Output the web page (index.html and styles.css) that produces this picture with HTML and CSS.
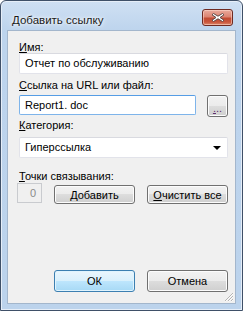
FILE: index.html
```html
<!DOCTYPE html>
<html lang="ru">
<head>
<meta charset="utf-8">
<title>Добавить ссылку</title>
<link rel="stylesheet" href="styles.css">
</head>
<body>
<div class="window">
  <div class="titlebar">
    <span class="title">Добавить ссылку</span>
    <div class="close">
      <svg width="16" height="11" viewBox="0 0 16 11">
        <path d="M3.5 1.5 L8 4.2 L12.5 1.5 L14 2.8 L10 5.5 L14 8.2 L12.5 9.5 L8 6.8 L3.5 9.5 L2 8.2 L6 5.5 L2 2.8 Z" fill="#fff" stroke="#5d4a48" stroke-width="1" stroke-linejoin="round"/>
      </svg>
    </div>
  </div>
  <div class="client">
    <div class="label"><u>И</u>мя:</div>
    <div class="input name">Отчет по обслуживанию</div>

    <div class="label l2"><u>С</u>сылка на URL или файл:</div>
    <div class="row url">
      <div class="input focus grow">Report1. doc</div>
      <div class="btn browse"><span class="dots"><u>.</u>..</span></div>
    </div>

    <div class="label l3"><u>К</u>атегория:</div>
    <div class="input combo">Гиперссылка<span class="arrow"></span></div>

    <div class="label l4"><u>Т</u>очки связывания:</div>
    <div class="row pts">
      <div class="count">0</div>
      <div class="btn wide"><u>Д</u>обавить</div>
      <div class="btn wide"><u>О</u>чистить все</div>
    </div>

    <div class="spacer"></div>
    <div class="footer">
      <div class="btn wide default">ОК</div>
      <div class="btn wide">Отмена</div>
    </div>
    <svg class="grip" width="11" height="11" viewBox="0 0 11 11">
      <path d="M10 2 L2 10 M10 5 L5 10 M10 8 L8 10" stroke="#b4b4b4" stroke-width="1"/>
      <path d="M10.5 2.5 L2.5 10.5 M10.5 5.5 L5.5 10.5 M10.5 8.5 L8.5 10.5" stroke="#fff" stroke-width="0.8"/>
    </svg>
  </div>
</div>
</body>
</html>
```
FILE: styles.css
```css
* { box-sizing: border-box; }
html, body { margin: 0; padding: 0; }
body {
  width: 243px;
  height: 311px;
  font-family: "Liberation Sans", Arial, sans-serif;
  font-size: 11px;
  color: #000;
  background: #fff;
}
.window {
  width: 243px;
  height: 311px;
  border: 1px solid #3f5068;
  border-radius: 6px 6px 0 0;
  box-shadow: inset 0 0 0 1px #e6eef8;
  background: linear-gradient(#cfe0f3 0, #bdd4ed 30px, #bcd3ec 100%);
  padding: 0 6px 6px 6px;
  display: flex;
  flex-direction: column;
}
.titlebar {
  height: 29px;
  flex: none;
  display: flex;
  align-items: flex-start;
  justify-content: space-between;
  padding: 8px 3px 0 5px;
}
.title {
  font-family: "Liberation Sans", Arial, sans-serif;
  font-size: 11.5px;
  line-height: 16px;
  color: #1a1a1a;
  padding-top: 3px;
  text-shadow: 0 0 6px #fff, 0 0 3px #fff;
}
.close {
  width: 31px;
  height: 17px;
  border: 1px solid #6e2a22;
  border-radius: 3px;
  background: linear-gradient(#e9aa9c 0, #dc8472 45%, #c24b33 55%, #c9553b 80%, #dc8a6c 100%);
  box-shadow: inset 0 0 0 1px rgba(255,220,210,0.55);
  display: flex;
  align-items: center;
  justify-content: center;
}
.close svg { display: block; }
.client {
  flex: 1;
  position: relative;
  background: #f0f0f0;
  border: 1px solid #a3b6cc;
  padding: 10px 7px 11px 11px;
  display: flex;
  flex-direction: column;
}
.label {
  height: 12px;
  line-height: 12px;
  white-space: nowrap;
}
.l2 { margin-top: 5px; margin-bottom: 4px; }
.l3 { margin-top: 2px; margin-bottom: 6px; }
.l4 { margin-top: 12px; margin-bottom: 1px; }
u { text-decoration: underline; text-underline-offset: 1px; }
.input {
  height: 21px;
  line-height: 19px;
  background: #fff;
  border: 1px solid #e2e3ea;
  border-top-color: #d9dae0;
  border-radius: 2px;
  padding: 0 5px;
  white-space: nowrap;
}
.focus {
  height: 20px;
  line-height: 18px;
  border-color: #7eb4ea;
  border-top-color: #569de5;
}
.row { display: flex; align-items: flex-start; }
.grow { flex: 1; }
.btn {
  border: 1px solid #707070;
  border-radius: 3px;
  background: linear-gradient(#f2f2f2 0, #ebebeb 50%, #dddddd 50%, #cfcfcf 100%);
  box-shadow: inset 0 0 0 1px #fcfcfc;
  display: flex;
  align-items: center;
  justify-content: center;
  white-space: nowrap;
}
.browse {
  width: 21px;
  height: 22px;
  margin-left: 11px;
  font-size: 11px;
  color: #603070;
  padding-top: 4px;
}
.dots { line-height: 10px; }
.combo {
  position: relative;
}
.arrow {
  position: absolute;
  right: 6px;
  top: 8px;
  width: 0;
  height: 0;
  border-left: 4px solid transparent;
  border-right: 4px solid transparent;
  border-top: 4px solid #000;
}
.count {
  width: 25px;
  height: 20px;
  line-height: 18px;
  border: 1px solid #c9cbcf;
  background: #f0f0f0;
  color: #8a8a8a;
  text-align: right;
  padding-right: 5px;
  margin-left: -2px;
  margin-right: 12px;
}
.wide {
  width: 81px;
  height: 19px;
  margin-top: 2px;
}
.pts .wide + .wide { margin-left: 12px; }
.spacer { flex: 1; }
.footer {
  display: flex;
  justify-content: flex-end;
  gap: 12px;
}
.footer .wide { height: 22px; margin-top: 0; }
.default {
  border-color: #3c7fb1;
  background: linear-gradient(#eaf6fd 0, #d9f0fc 50%, #bee6fd 50%, #a7d9f5 100%);
  box-shadow: inset 0 0 0 1px #e0f4fe;
}
.grip {
  position: absolute;
  right: 1px;
  bottom: 1px;
}
```
